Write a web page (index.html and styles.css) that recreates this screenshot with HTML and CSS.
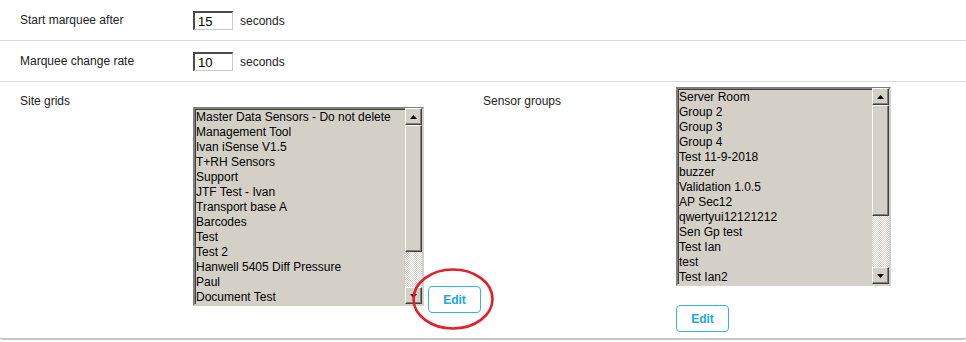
FILE: index.html
```html
<!DOCTYPE html>
<html lang="en">
<head>
  <meta charset="UTF-8">
  <meta name="viewport" content="width=device-width, initial-scale=1.0">
  <title>Display settings</title>
  <link rel="stylesheet" href="styles.css">
</head>
<body>
  <div class="panel">
    <div class="row">
      <div class="label">Start marquee after</div>
      <input type="text" class="num" value="15" readonly>
      <span class="unit">seconds</span>
    </div>
    <div class="row">
      <div class="label">Marquee change rate</div>
      <input type="text" class="num" value="10" readonly>
      <span class="unit">seconds</span>
    </div>
    <div class="row lists">
      <div class="label top">Site grids</div>
      <div class="grid-col">
        <div class="listbox wide">
          <div class="items">
            <div>Master Data Sensors - Do not delete</div>
            <div>Management Tool</div>
            <div>Ivan iSense V1.5</div>
            <div>T+RH Sensors</div>
            <div>Support</div>
            <div>JTF Test - Ivan</div>
            <div>Transport base A</div>
            <div>Barcodes</div>
            <div>Test</div>
            <div>Test 2</div>
            <div>Hanwell 5405 Diff Pressure</div>
            <div>Paul</div>
            <div>Document Test</div>
          </div>
          <div class="scrollbar">
            <div class="sb-btn"><svg width="7" height="4" viewBox="0 0 7 4"><path d="M3.5 0 L7 4 L0 4 Z" fill="#000"/></svg></div>
            <div class="sb-thumb thumb-a"></div>
            <div class="sb-track"></div>
            <div class="sb-btn"><svg width="7" height="4" viewBox="0 0 7 4"><path d="M0 0 L7 0 L3.5 4 Z" fill="#000"/></svg></div>
          </div>
        </div>
        <button class="edit edit-side">Edit</button>
      </div>
      <div class="label top inner">Sensor groups</div>
      <div class="group-col">
        <div class="listbox narrow">
          <div class="items">
            <div>Server Room</div>
            <div>Group 2</div>
            <div>Group 3</div>
            <div>Group 4</div>
            <div>Test 11-9-2018</div>
            <div>buzzer</div>
            <div>Validation 1.0.5</div>
            <div>AP Sec12</div>
            <div>qwertyui12121212</div>
            <div>Sen Gp test</div>
            <div>Test Ian</div>
            <div>test</div>
            <div>Test Ian2</div>
          </div>
          <div class="scrollbar">
            <div class="sb-btn"><svg width="7" height="4" viewBox="0 0 7 4"><path d="M3.5 0 L7 4 L0 4 Z" fill="#000"/></svg></div>
            <div class="sb-thumb thumb-b"></div>
            <div class="sb-track"></div>
            <div class="sb-btn"><svg width="7" height="4" viewBox="0 0 7 4"><path d="M0 0 L7 0 L3.5 4 Z" fill="#000"/></svg></div>
          </div>
        </div>
        <button class="edit edit-below">Edit</button>
      </div>
    </div>
    <!-- annotation ring round the first Edit button -->
    <svg class="ring" width="84" height="64" viewBox="0 0 84 64">
      <ellipse cx="42" cy="32" rx="39.5" ry="29.5" fill="none" stroke="#e2202b" stroke-width="2.6"/>
    </svg>
  </div>
</body>
</html>
```

FILE: styles.css
```css
body {
  margin: 0;
  font-family: "Liberation Sans", Arial, sans-serif;
  font-size: 12px;
  color: #222;
  background: #fff;
}
.panel {
  position: relative;
  width: 966px;
  box-sizing: border-box;
  border-bottom: 2px solid #c6c6c6;
  border-radius: 0 0 3px 3px;
  box-shadow: 0 1px 0 #e2e2e2;
}
.row {
  display: flex;
  align-items: center;
  height: 40px;
  border-bottom: 1px solid #d9d9d9;
}
.label {
  width: 173px;
  padding-left: 20px;
  line-height: 15px;
}
.label.inner {
  width: 193px;
  padding-left: 0;
}
.num {
  width: 40px;
  height: 19px;
  box-sizing: border-box;
  margin: 1px 0 0;
  padding: 0 3px;
  border-style: solid;
  border-width: 2px 1px 1px 2px;
  border-color: #4a4a4a #c9c9c9 #c9c9c9 #4a4a4a;
  font-family: "Liberation Sans", Arial, sans-serif;
  font-size: 13px;
  color: #000;
  outline: none;
}
.unit {
  margin-left: 7px;
  margin-top: 1px;
}
.lists {
  align-items: flex-start;
  height: 256px;
  border-bottom: none;
}
.label.top {
  padding-top: 12px;
}
.grid-col {
  display: flex;
  width: 290px;
  margin-top: 25px;
}
.group-col {
  display: flex;
  flex-direction: column;
  margin-top: 5px;
}
.listbox {
  display: flex;
  height: 199px;
  box-sizing: border-box;
  border: 2px solid;
  border-color: #808080 #d4d0c8 #d4d0c8 #808080;
  box-shadow: inset 1px 1px 0 #404040;
  background: #d4d0c8;
  color: #000;
}
.listbox.wide {
  width: 231px;
}
.listbox.narrow {
  width: 215px;
}
.items {
  flex: 1;
  overflow: hidden;
  padding-left: 1px;
  padding-top: 1px;
  line-height: 15px;
  white-space: nowrap;
}
.scrollbar {
  display: flex;
  flex-direction: column;
  width: 17px;
  margin-top: -1px;
}
.sb-btn, .sb-thumb {
  box-sizing: border-box;
  border: 1px solid;
  border-color: #fff #404040 #404040 #fff;
  box-shadow: inset -1px -1px 0 #808080;
  background: #d4d0c8;
}
.sb-btn {
  display: flex;
  align-items: center;
  justify-content: center;
  height: 17px;
}
.thumb-a {
  height: 127px;
}
.thumb-b {
  height: 111px;
}
.sb-track {
  flex: 1;
  background: repeating-conic-gradient(#d4d0c8 0 25%, #fff 0 50%) 0 0 / 2px 2px;
}
.edit {
  width: 53px;
  height: 27px;
  border: 1px solid #33b4e6;
  border-radius: 4px;
  background: #fff;
  color: #1ea6df;
  font-family: "Liberation Sans", Arial, sans-serif;
  font-size: 12px;
  font-weight: bold;
  cursor: pointer;
}
.edit-side {
  margin-left: 4px;
  margin-top: 179px;
}
.edit-below {
  margin-top: 19px;
}
.ring {
  position: absolute;
  left: 411px;
  top: 267px;
}
```
